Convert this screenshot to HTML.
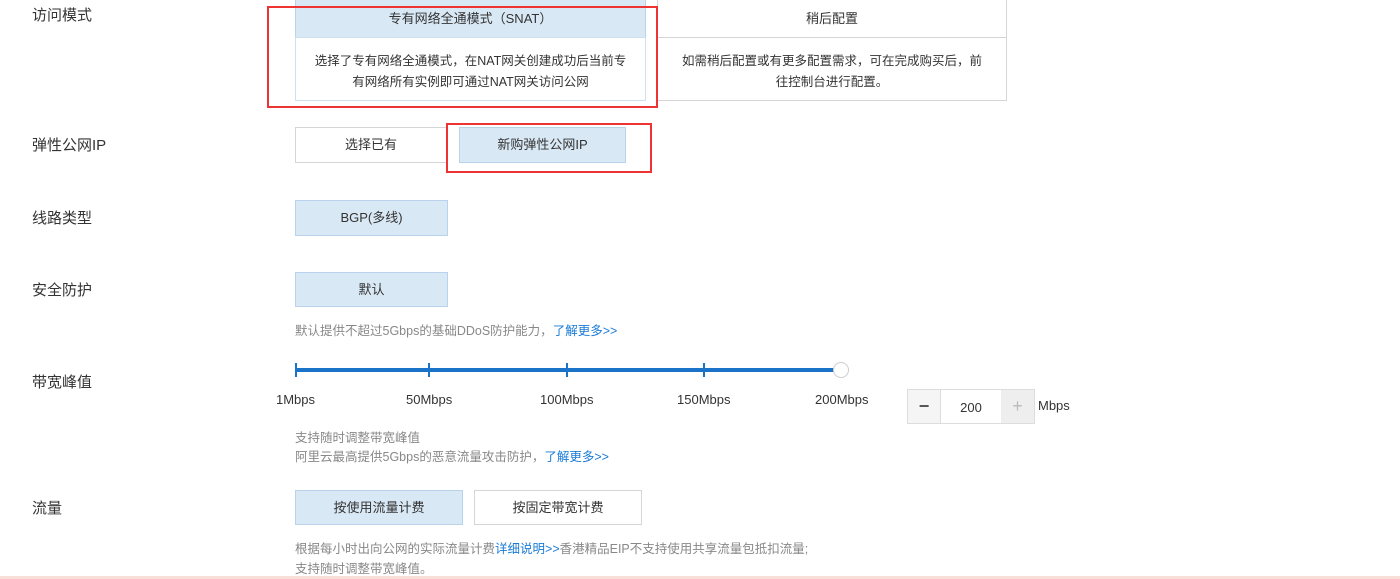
<!DOCTYPE html><html><head><meta charset="utf-8"><style>
body{margin:0;width:1400px;height:579px;background:#fff;position:relative;overflow:hidden;font-family:"Liberation Sans","Noto Sans CJK SC",sans-serif;color:#333}
.a{position:absolute}
.lbl{font-size:15px;color:#333;left:32px}
.btn{position:absolute;box-sizing:border-box;border:1px solid #d5d5d5;background:#fff;font-size:13px;text-align:center;color:#333}
.sel{background:#d9e8f5;border-color:#b9d4ea}
.t{font-size:12.5px;color:#888}
.lk{color:#1a7bd6}
.red{position:absolute;border:2px solid #e33;box-sizing:border-box}
</style></head><body>
<div class="a lbl" style="top:4px">访问模式</div>
<div class="btn sel" style="left:295px;top:-2px;width:351px;height:40px;line-height:40px">专有网络全通模式（SNAT）</div>
<div class="btn" style="left:295px;top:37px;width:351px;height:64px;border-color:#cfe0ef;padding-top:13px;line-height:21px;font-size:12.5px">选择了专有网络全通模式，在NAT网关创建成功后当前专<br>有网络所有实例即可通过NAT网关访问公网</div>
<div class="btn" style="left:657px;top:-2px;width:350px;height:40px;line-height:40px">稍后配置</div>
<div class="btn" style="left:657px;top:37px;width:350px;height:64px;padding-top:13px;line-height:21px;font-size:12.5px">如需稍后配置或有更多配置需求，可在完成购买后，前<br>往控制台进行配置。</div>
<div class="red" style="left:267px;top:6px;width:391px;height:102px"></div>

<div class="a lbl" style="top:134px">弹性公网IP</div>
<div class="btn" style="left:295px;top:127px;width:152px;height:36px;line-height:34px">选择已有</div>
<div class="btn sel" style="left:459px;top:127px;width:167px;height:36px;line-height:34px">新购弹性公网IP</div>
<div class="red" style="left:446px;top:123px;width:206px;height:50px"></div>

<div class="a lbl" style="top:207px">线路类型</div>
<div class="btn sel" style="left:295px;top:200px;width:153px;height:36px;line-height:34px">BGP(多线)</div>

<div class="a lbl" style="top:279px">安全防护</div>
<div class="btn sel" style="left:295px;top:272px;width:153px;height:35px;line-height:33px">默认</div>
<div class="a t" style="left:295px;top:320px">默认提供不超过5Gbps的基础DDoS防护能力，<span class="lk">了解更多&gt;&gt;</span></div>

<div class="a lbl" style="top:371px">带宽峰值</div>
<div class="a" style="left:295px;top:368px;width:540px;height:4px;background:#1a73c8"></div>
<div class="a" style="left:295px;top:363px;width:2px;height:14px;background:#1a73c8"></div>
<div class="a" style="left:428px;top:363px;width:2px;height:14px;background:#1a73c8"></div>
<div class="a" style="left:566px;top:363px;width:2px;height:14px;background:#1a73c8"></div>
<div class="a" style="left:703px;top:363px;width:2px;height:14px;background:#1a73c8"></div>
<div class="a" style="left:833px;top:362px;width:16px;height:16px;border-radius:50%;background:#fff;border:1px solid #ccc;box-sizing:border-box"></div>
<div class="a" style="left:276px;top:392px;font-size:13px">1Mbps</div>
<div class="a" style="left:406px;top:392px;font-size:13px">50Mbps</div>
<div class="a" style="left:540px;top:392px;font-size:13px">100Mbps</div>
<div class="a" style="left:677px;top:392px;font-size:13px">150Mbps</div>
<div class="a" style="left:815px;top:392px;font-size:13px">200Mbps</div>
<div class="a" style="left:907px;top:389px;width:128px;height:35px;border:1px solid #ddd;box-sizing:border-box;background:#fff"></div>
<div class="a" style="left:908px;top:390px;width:32px;height:33px;background:#f5f5f5;border-right:1px solid #ddd;text-align:center;line-height:33px;font-size:18px;font-weight:bold;color:#555">−</div>
<div class="a" style="left:1001px;top:390px;width:33px;height:33px;background:#eee;text-align:center;line-height:33px;font-size:18px;color:#bbb">+</div>
<div class="a" style="left:941px;top:400px;width:60px;text-align:center;font-size:13px">200</div>
<div class="a" style="left:1038px;top:398px;font-size:13px">Mbps</div>
<div class="a t" style="left:295px;top:427px">支持随时调整带宽峰值</div>
<div class="a t" style="left:295px;top:446px">阿里云最高提供5Gbps的恶意流量攻击防护，<span class="lk">了解更多&gt;&gt;</span></div>

<div class="a lbl" style="top:497px">流量</div>
<div class="btn sel" style="left:295px;top:490px;width:168px;height:35px;line-height:33px">按使用流量计费</div>
<div class="btn" style="left:474px;top:490px;width:168px;height:35px;line-height:33px">按固定带宽计费</div>
<div class="a t" style="left:295px;top:538px">根据每小时出向公网的实际流量计费<span class="lk">详细说明&gt;&gt;</span>香港精品EIP不支持使用共享流量包抵扣流量;</div>
<div class="a t" style="left:295px;top:558px">支持随时调整带宽峰值。</div>
<div class="a" style="left:0;top:576px;width:1400px;height:3px;background:#f8e0d8"></div>
</body></html>
